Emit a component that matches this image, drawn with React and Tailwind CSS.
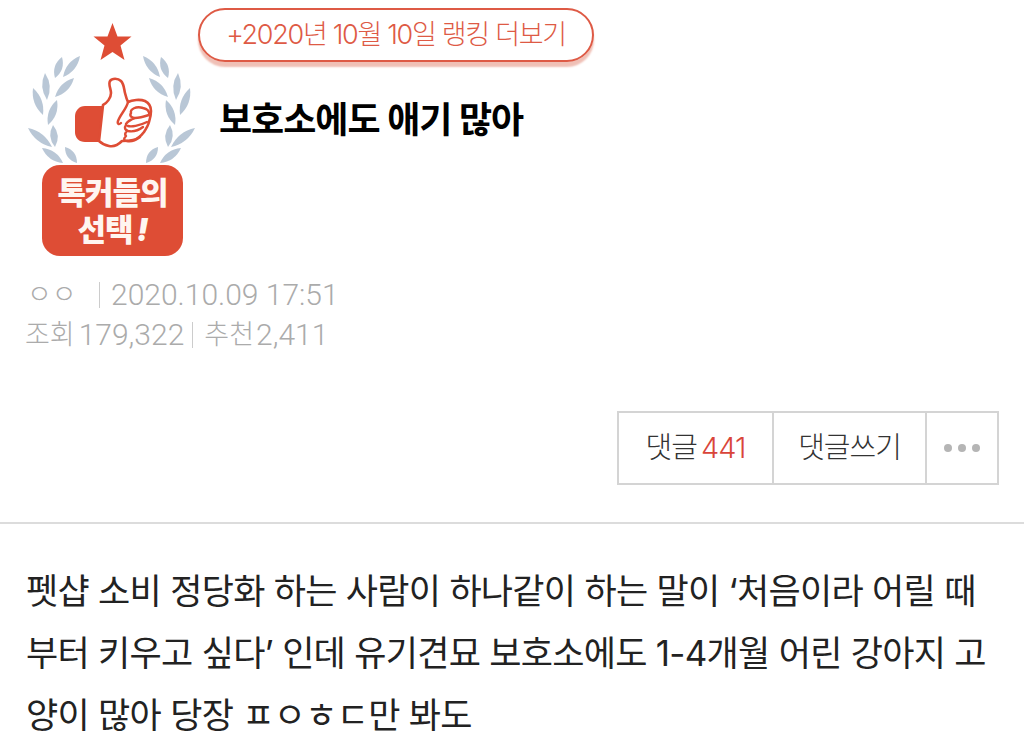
const leaves = [
  [63, 77, 80, 56], [55, 78, 62, 57], [55, 97, 74, 78], [47, 100, 45, 73], [43, 115, 33, 88],
  [48, 125, 57, 100], [52, 147, 28, 128], [55, 147, 53, 125], [63, 163, 42, 148], [77, 163, 65, 147],
]

function Leaf({ x1, y1, x2, y2 }) {
  const mx = (x1 + x2) / 2
  const my = (y1 + y2) / 2
  const dx = x2 - x1
  const dy = y2 - y1
  const len = Math.hypot(dx, dy)
  const nx = (-dy / len) * 7.5
  const ny = (dx / len) * 7.5
  return <path d={`M${x1} ${y1}Q${mx + nx} ${my + ny} ${x2} ${y2}Q${mx - nx} ${my - ny} ${x1} ${y1}Z`} />
}

function Emblem() {
  return (
    <svg width="168" height="175" viewBox="0 0 168 175" className="block">
      <g transform="translate(-28 -8)">
        <path d="M112.5 23l5 13.500h14l-11 9 4 14.500-12-8-12 8 4-14.500-11-9h14z" fill="#de4d35" />
        <g fill="#b9c7d6">
          {leaves.map((l, i) => <Leaf key={i} x1={l[0]} y1={l[1]} x2={l[2]} y2={l[3]} />)}
          <g transform="translate(223 0) scale(-1 1)">
            {leaves.map((l, i) => <Leaf key={i} x1={l[0]} y1={l[1]} x2={l[2]} y2={l[3]} />)}
          </g>
        </g>
        <path d="M103 106H85c-6 0-10 5-10 10v16c0 6 4 10 10 10h18z" fill="#de4d35" />
        <path d="M103 105c4-2 8-7 8-12 0-4-3-9-1-12 2-3 8-3 11 0 3 3 3 8 4 12 1 4 2 7 3 9 4-2 12-3 17-1 4 2 6 6 6 10 0 4-1 8-2 11-1 4-3 7-5 10-3 4-6 7-11 8-4 1-7 1-11 1-4 4-9 6-13 5-5-1-8-3-10-5z" fill="#fff" stroke="#de4d35" strokeWidth="2.6" strokeLinejoin="round" />
        <path d="M128 102c-1 6-8 13-10 19-1 3 1 4 3 2M131 113c-1-4 5-7 12-5 4 1 6 3 6 5M131 113c-2 3 1 5 4 5 5 0 11-2 14-3M126 124c2-3 6-5 9-6M128 126c3 1 11 0 19-4M126 125c-2 3-1 5 2 6 5 1 11-1 15-4M126 136c-3 3-2 5 1 5 4 1 9-1 13-4M127 131c-2 2-2 4-1 5" fill="none" stroke="#de4d35" strokeWidth="2.4" strokeLinecap="round" />
      </g>
    </svg>
  )
}

function Badge() {
  return (
    <div className="w-[141px] h-[91px] -mt-[18px] ml-[14px] relative rounded-[18px] bg-[#de4d35] flex flex-col items-center justify-center text-[#fff5f0] text-[31px] leading-[37px] font-black tracking-[-1px]">
      <span>톡커들의</span>
      <span>선택<i className="ml-[4px]">!</i></span>
    </div>
  )
}

export default function App() {
  return (
    <div className="w-[1024px] h-[748px] overflow-hidden bg-white font-['Inter','Noto_Sans_CJK_KR',sans-serif]">
      <div className="flex pl-[28px] pt-[8px]">
        <div className="w-[168px] shrink-0">
          <Emblem />
          <Badge />
        </div>
        <div className="pl-[2px]">
          <div className="w-[396px] h-[54px] rounded-[27px] border-2 border-[#de5a45] shadow-[0_5px_2px_#f0c0b6] flex items-center justify-center text-[27px] font-light tracking-[-1.3px] text-[#de5a45]">
            +2020년 10월 10일 랭킹 더보기
          </div>
          <h1 className="mt-[33px] ml-[21px] text-[36px] leading-[50px] font-bold tracking-[-1px] text-black">보호소에도 애기 많아</h1>
        </div>
      </div>

      <div className="pl-[25px] pt-[19px] text-[27px] leading-[40px] font-light text-[#ababab]">
        <div className="flex items-center">
          <span className="w-[74px] pl-[2px]">ㅇㅇ</span>
          <span className="w-[1px] h-[26px] bg-[#cccccc] mr-[11px]" />
          <span className="font-['Roboto'] text-[30px]">2020.10.09 17:51</span>
        </div>
        <div className="flex items-center">
          <span>조회</span>
          <span className="ml-[4px] font-['Roboto'] text-[30px]">179,322</span>
          <span className="w-[1px] h-[26px] bg-[#cccccc] ml-[8px] mr-[11px]" />
          <span>추천</span>
          <span className="ml-[2px] font-['Roboto'] text-[30px]">2,411</span>
        </div>
      </div>

      <div className="flex justify-end pr-[25px] mt-[56px]">
        <div className="flex h-[74px] border-2 border-[#d4d4d4] text-[29px] font-light tracking-[-1px] text-[#333333]">
          <div className="w-[155px] flex items-center justify-center gap-[4px] border-r-2 border-[#d4d4d4]">댓글 <span className="text-[#d9453a]">441</span></div>
          <div className="w-[153px] flex items-center justify-center border-r-2 border-[#d4d4d4]">댓글쓰기</div>
          <div className="w-[70px] flex items-center justify-center gap-[6px]">
            <span className="w-[8px] h-[8px] rounded-full bg-[#b5b5b5]" />
            <span className="w-[8px] h-[8px] rounded-full bg-[#b5b5b5]" />
            <span className="w-[8px] h-[8px] rounded-full bg-[#b5b5b5]" />
          </div>
        </div>
      </div>

      <div className="mt-[37px] border-t-2 border-[#dcdcdc] pt-[36px] pl-[26px] text-[35px] leading-[62px] tracking-[-0.72px] text-[#222222] whitespace-nowrap">
        <p>펫샵 소비 정당화 하는 사람이 하나같이 하는 말이 ‘처음이라 어릴 때</p>
        <p>부터 키우고 싶다’ 인데 유기견묘 보호소에도 1-4개월 어린 강아지 고</p>
        <p>양이 많아 당장 ㅍㅇㅎㄷ만 봐도</p>
      </div>
    </div>
  )
}
